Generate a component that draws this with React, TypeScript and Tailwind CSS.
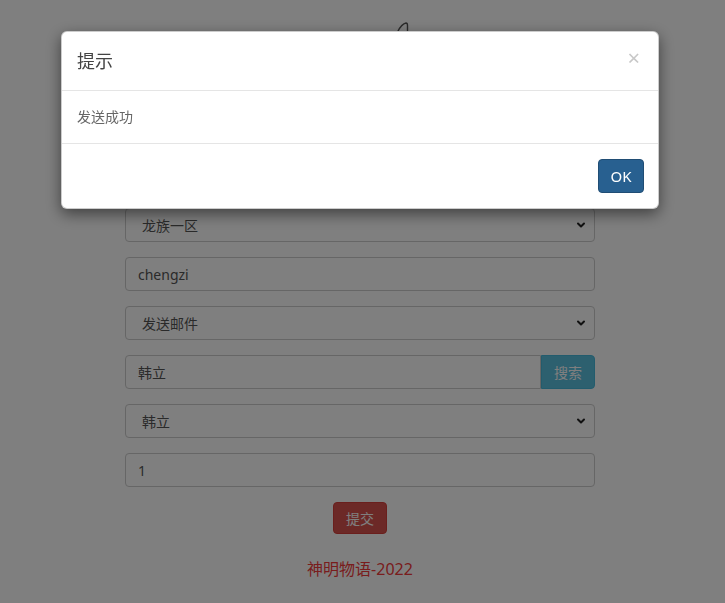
import { ChevronDown } from "lucide-react";

const font = "font-['Noto_Sans','Noto_Sans_CJK_SC',sans-serif]";

function SelectField({ value }: { value: string }) {
  return (
    <div className="relative h-[34px]">
      <select
        defaultValue={value}
        className="h-full w-full appearance-none rounded-[4px] border border-[#ccc] bg-white pl-[16px] text-[14px] text-[#555] outline-none"
      >
        <option>{value}</option>
      </select>
      <ChevronDown className="pointer-events-none absolute right-[8px] top-[11px] h-[12px] w-[12px] text-[#222]" strokeWidth={4} />
    </div>
  );
}

function TextField({ value }: { value: string }) {
  return (
    <input
      defaultValue={value}
      className="h-[34px] w-full rounded-[4px] border border-[#ccc] bg-white px-[12px] text-[14px] text-[#555] outline-none"
    />
  );
}

export default function App() {
  return (
    <div className={`relative min-h-[603px] bg-white ${font}`}>
      <div className="pt-[22px]">
        <svg className="ml-[396px] block h-[10px] w-[14px]" viewBox="0 0 14 10" fill="none">
          <path d="M1.5 10 C4 5 7 1.5 10 1 C11 1 11.5 2 11.5 3.5 L11.5 10" stroke="#555" strokeWidth="1.4" />
        </svg>
      </div>

      <form className="ml-[125px] mt-[29px] flex w-[470px] flex-col gap-[15px]">
        <SelectField value="请选择" />
        <SelectField value="请选择" />
        <TextField value="" />
        <SelectField value="龙族一区" />
        <TextField value="chengzi" />
        <SelectField value="发送邮件" />
        <div className="flex h-[34px]">
          <input
            defaultValue="韩立"
            className="h-full flex-1 rounded-l-[4px] border border-[#ccc] bg-white px-[12px] text-[14px] text-[#555] outline-none"
          />
          <button type="button" className="h-full w-[54px] rounded-r-[4px] border border-[#46b8da] bg-[#5bc0de] text-[14px] text-white">
            搜索
          </button>
        </div>
        <SelectField value="韩立" />
        <TextField value="1" />
        <div className="flex justify-center">
          <button type="button" className="h-[32px] w-[54px] rounded-[4px] border border-[#d43f3a] bg-[#d9534f] text-[14px] text-white">
            提交
          </button>
        </div>
      </form>

      <p className="mt-[24px] pr-[5px] text-center text-[16px] leading-[22px] text-[#f23a3a]">神明物语-2022</p>

      {/* backdrop + dialog */}
      <div className="fixed inset-0 bg-black/50">
        <div className="ml-[61px] mt-[31px] w-[598px] rounded-[6px] border border-black/20 bg-white shadow-[0_5px_15px_rgba(0,0,0,0.5)]">
          <div className="flex items-start justify-between border-b border-[#e5e5e5] px-[15px] py-[15px]">
            <h4 className="text-[18px] leading-[28px] text-[#444]">提示</h4>
            <button type="button" className="mr-[3px] mt-[-4px] text-[22px] leading-[28px] text-[#c8c8c8]">
              ×
            </button>
          </div>
          <div className="border-b border-[#e5e5e5] px-[15px] py-[15px] text-[14px] leading-[22px] text-[#666]">发送成功</div>
          <div className="flex justify-end px-[14px] py-[15px]">
            <button type="button" className="h-[34px] w-[46px] rounded-[4px] border border-[#204d74] bg-[#286090] text-[15px] text-white">
              OK
            </button>
          </div>
        </div>
      </div>
    </div>
  );
}
